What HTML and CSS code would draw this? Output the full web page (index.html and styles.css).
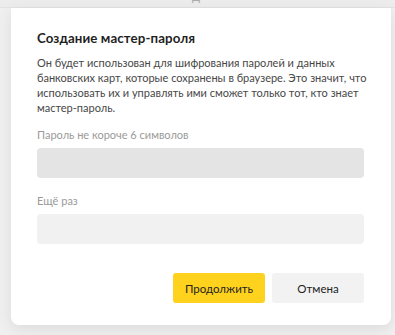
FILE: index.html
```html
<!DOCTYPE html>
<html lang="ru">
<head>
<meta charset="utf-8">
<link rel="stylesheet" href="styles.css">
</head>
<body>
<div class="topbar"><span class="topbar-text">д</span></div>
<div class="page">
  <div class="dialog">
    <h1 class="title">Создание мастер-пароля</h1>
    <p class="desc">Он будет использован для шифрования паролей и данных банковских карт, которые сохранены в браузере. Это значит, что использовать их и управлять ими сможет только тот, кто знает мастер-пароль.</p>
    <div class="field">
      <div class="label">Пароль не короче 6 символов</div>
      <div class="input input-active"></div>
    </div>
    <div class="field field-second">
      <div class="label">Ещё раз</div>
      <div class="input"></div>
    </div>
    <div class="actions">
      <button class="btn btn-primary">Продолжить</button>
      <button class="btn btn-secondary">Отмена</button>
    </div>
  </div>
</div>
</body>
</html>
```
FILE: styles.css
```css
html, body {
  margin: 0;
  padding: 0;
}
body {
  width: 395px;
  height: 335px;
  overflow: hidden;
  background: #efefef;
  font-family: "Lato", "Noto Sans", sans-serif;
}
.topbar {
  height: 8px;
  background: #ececec;
  border-bottom: 1px solid #e2e2e2;
  box-sizing: border-box;
  overflow: hidden;
}
.topbar-text {
  display: block;
  margin-left: 192px;
  margin-top: -11px;
  font-size: 13px;
  line-height: 14px;
  color: #aaa;
}
.page {
  padding-left: 11px;
}
.dialog {
  width: 380px;
  height: 317px;
  box-sizing: border-box;
  background: #fff;
  border-radius: 0 0 8px 8px;
  box-shadow: 0 4px 14px rgba(0,0,0,0.08);
  padding: 21px 27px 0 26px;
}
.title {
  margin: 0;
  font-size: 13.3px;
  line-height: 18px;
  font-weight: 700;
  color: #1f1f1f;
  letter-spacing: 0.1px;
}
.desc {
  margin: 8px -10px 0 0;
  font-size: 11px;
  line-height: 15px;
  color: #474747;
}
.field {
  margin-top: 12px;
}
.field-second {
  margin-top: 15px;
}
.label {
  font-size: 11px;
  line-height: 15px;
  color: #9a9a9a;
  margin-bottom: 6px;
}
.input {
  height: 30px;
  border-radius: 4px;
  background: #f1f1f1;
}
.input-active {
  background: #e4e4e4;
}
.actions {
  display: flex;
  justify-content: flex-end;
  gap: 7px;
  margin-top: 29px;
}
.btn {
  width: 92px;
  height: 30px;
  border: 0;
  border-radius: 3px;
  font-family: "Lato", "Noto Sans", sans-serif;
  font-size: 11.5px;
  color: #222;
  padding: 0;
}
.btn-primary {
  background: #ffd21e;
}
.btn-secondary {
  background: #f2f2f2;
}
```
